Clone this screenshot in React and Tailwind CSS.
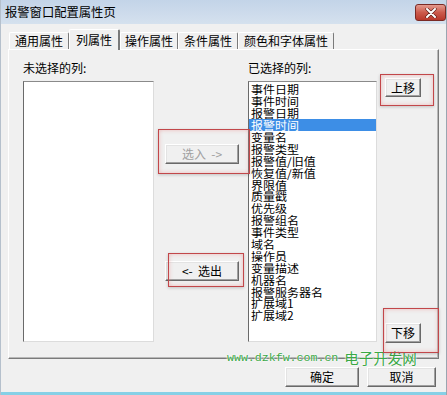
import React from 'react';

const items = ['事件日期','事件时间','报警日期','报警时间','变量名','报警类型','报警值/旧值','恢复值/新值','界限值','质量戳','优先级','报警组名','事件类型','域名','操作员','变量描述','机器名','报警服务器名','扩展域1','扩展域2'];

const btn = "flex items-center justify-center bg-[#f0f0f0] border border-t-white border-l-white border-r-[#696969] border-b-[#696969] shadow-[inset_-1px_-1px_0_#a0a0a0,inset_1px_1px_0_#e3e3e3] text-[12px] leading-none";

function Tab({ label, w, selected }) {
  if (selected) {
    return (
      <div className={`relative z-10 -mb-px h-[21px] ${w} flex items-center justify-center bg-[#f0f0f0] border-t border-l border-t-white border-l-white border-r-2 border-r-[#7a7a7a] rounded-t-[2px]`}>
        <span className="leading-none">{label}</span>
      </div>
    );
  }
  return (
    <div className={`h-[17px] ${w} flex items-center justify-center bg-[#f0f0f0] border-t border-l border-t-white border-l-white border-r border-r-[#7a7a7a] rounded-t-[2px]`}>
      <span className="leading-none">{label}</span>
    </div>
  );
}

export default function App() {
  return (
    <div className="relative w-[447px] h-[395px] overflow-hidden bg-[#f0f0f0] flex flex-col border-l border-r border-l-[#b5c0cc] border-r-[#9aa5b0] text-[12px] text-black font-['Noto_Sans_CJK_SC','Liberation_Sans',sans-serif]">
      {/* title bar */}
      <div className="h-[24px] flex items-center justify-between pl-[4px] pr-[0px] bg-gradient-to-b from-[#c3d4e8] to-[#d5e1ee]">
        <span className="leading-none text-[12.3px]">报警窗口配置属性页</span>
        <div className="w-[31px] h-[17px] mt-[1px] rounded-[3px] border border-[#7a2a25] bg-gradient-to-b from-[#e39a8f] via-[#cc5a4c] to-[#b8372b] flex items-center justify-center">
          <svg width="12" height="10" viewBox="0 0 12 10">
            <path d="M2 1 L10 9 M10 1 L2 9" stroke="#5a1a15" strokeWidth="3.2" strokeLinecap="round" />
            <path d="M2 1 L10 9 M10 1 L2 9" stroke="#ffffff" strokeWidth="2" strokeLinecap="round" />
          </svg>
        </div>
      </div>

      {/* tabs */}
      <div className="flex items-end h-[25px] pl-[8px]">
        <Tab label="通用属性" w="w-[60px]" />
        <Tab label="列属性" w="w-[51px]" selected />
        <Tab label="操作属性" w="w-[58px]" />
        <Tab label="条件属性" w="w-[60px]" />
        <Tab label="颜色和字体属性" w="w-[96px]" />
      </div>

      {/* panel */}
      <div className="ml-[7px] w-[431px] h-[310px] border border-t-white border-l-white border-r-[#7a7a7a] border-b-[#7a7a7a] shadow-[inset_-1px_-1px_0_#b8b8b8] flex pt-[11px] pl-[14px]">
        {/* left column */}
        <div className="w-[131px] flex flex-col">
          <div className="h-[20px] leading-[14px]">未选择的列:</div>
          <div className="h-[261px] bg-white border border-t-[#8a8a8a] border-l-[#6a6a6a] border-r-[#dcdcdc] border-b-[#dcdcdc]"></div>
        </div>

        {/* middle */}
        <div className="w-[95px] flex flex-col pl-[11px] pt-[83px]">
          <div className={`${btn} w-[74px] h-[20px] text-[#a0a0a0]`}>选入&nbsp;&nbsp;-&gt;</div>
          <div className={`${btn} w-[74px] h-[20px] mt-[97px]`}>&lt;-&nbsp;&nbsp;选出</div>
        </div>

        {/* right column */}
        <div className="w-[129px] flex flex-col -ml-[1px]">
          <div className="h-[20px] leading-[14px]">已选择的列:</div>
          <div className="h-[261px] bg-white border border-t-[#8a8a8a] border-l-[#6a6a6a] border-r-[#dcdcdc] border-b-[#dcdcdc] pt-[1px]">
            {items.map((t, i) => (
              <div
                key={t}
                className={`h-[11.9px] pl-[2px] whitespace-nowrap flex items-center overflow-visible ${i === 3 ? 'bg-[#3d8ee6] text-white' : ''}`}
              >
                <span className="block leading-[11px] scale-y-[0.92] origin-center">{t}</span>
              </div>
            ))}
          </div>
        </div>

        {/* right buttons */}
        <div className="flex flex-col pl-[8px] pt-[17px]">
          <div className={`${btn} w-[36px] h-[19px]`}>上移</div>
          <div className={`${btn} w-[36px] h-[20px] mt-[226px]`}>下移</div>
        </div>
      </div>

      {/* bottom buttons */}
      <div className="flex mt-[8px] pl-[284px] gap-[8px]">
        <div className={`${btn} w-[74px] h-[20px]`}>确定</div>
        <div className={`${btn} w-[69px] h-[20px]`}>取消</div>
      </div>

      <div className="mt-auto h-[3px] bg-[#86d0e6]"></div>

      {/* watermark */}
      <div className="absolute left-[226px] top-[351px] flex items-center text-[#3aa846] [text-shadow:0_0_2px_#ffffff,0_0_2px_#ffffff]">
        <span className="font-['Liberation_Mono','DejaVu_Sans_Mono',monospace] text-[11.6px] tracking-[0px] leading-none">www.dzkfw.com.cn</span>
        <span className="ml-[6px] text-[14.5px] leading-none">电子开发网</span>
      </div>

      {/* red annotation boxes */}
      <div className="absolute left-[157px] top-[129px] w-[92px] h-[45px] border-[1.5px] border-[#c2474a] shadow-[inset_0_0_4px_rgba(230,130,130,0.5),0_1px_3px_rgba(0,0,0,0.2)]"></div>
      <div className="absolute left-[167px] top-[253px] w-[76px] h-[34px] border-[1.5px] border-[#c2474a] shadow-[inset_0_0_4px_rgba(230,130,130,0.5),0_1px_3px_rgba(0,0,0,0.2)]"></div>
      <div className="absolute left-[379px] top-[74px] w-[54px] h-[32px] border-[1.5px] border-[#c2474a] shadow-[inset_0_0_4px_rgba(230,130,130,0.5),0_1px_3px_rgba(0,0,0,0.2)]"></div>
      <div className="absolute left-[382px] top-[308px] w-[56px] h-[45px] border-[1.5px] border-[#c2474a] shadow-[inset_0_0_4px_rgba(230,130,130,0.5),0_1px_3px_rgba(0,0,0,0.2)]"></div>
    </div>
  );
}
